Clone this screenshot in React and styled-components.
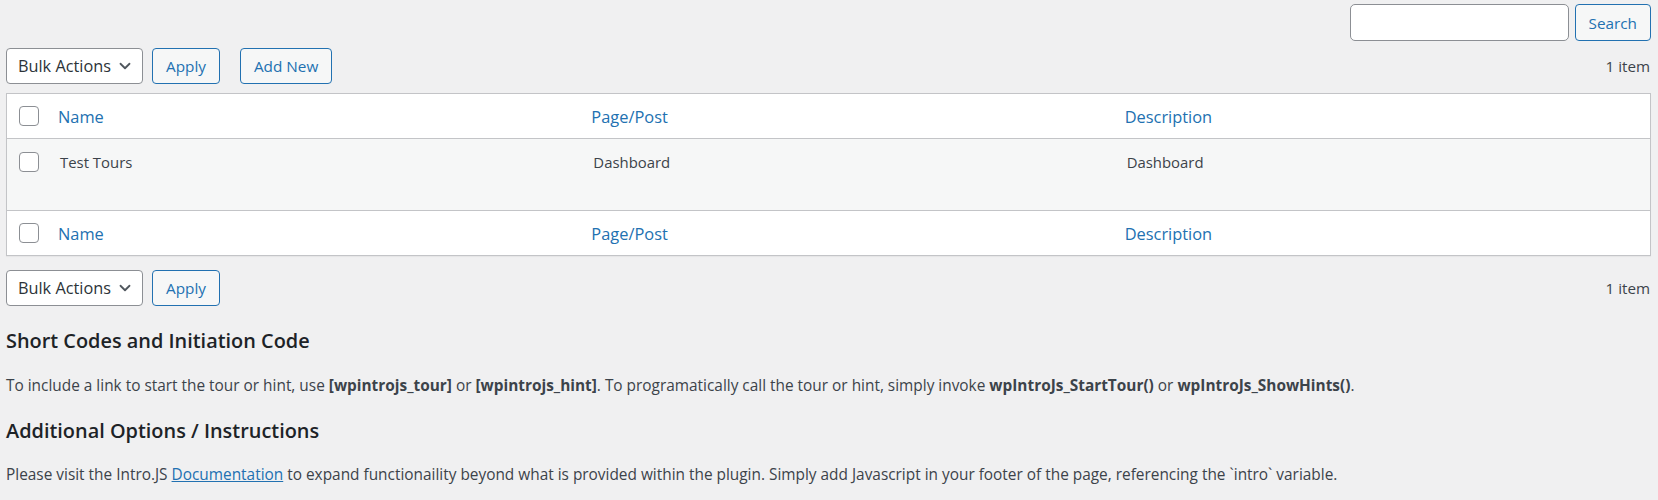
import React from "react";
import styled, { createGlobalStyle } from "styled-components";

const Global = createGlobalStyle`
  html, body { margin: 0; padding: 0; background: #f0f0f1; }
  body { font-family: "Open Sans", "Noto Sans", sans-serif; color: #3c434a; }
  * { box-sizing: border-box; }
`;

const Page = styled.div`
  padding: 4px 7px 0 6px;
`;

const SearchBox = styled.div`
  display: flex;
  justify-content: flex-end;
  gap: 6px;
`;

const SearchInput = styled.input`
  width: 219px;
  height: 37px;
  border: 1px solid #8c8f94;
  border-radius: 5px;
  background: #fff;
  padding: 0 10px;
  font: inherit;
`;

const Button = styled.button`
  height: ${(p) => p.$h || 36}px;
  padding: 0 13px;
  border: 1px solid #2271b1;
  border-radius: 4px;
  background: #f6f7f7;
  color: #2271b1;
  font-family: "Open Sans", sans-serif;
  font-size: 15.3px;
  margin-left: ${(p) => p.$ml || 0}px;
  cursor: pointer;
`;

const Nav = styled.div`
  display: flex;
  align-items: center;
  margin-top: ${(p) => p.$mt}px;
  height: 36px;
`;

const NavLeft = styled.div`
  display: flex;
  align-items: center;
  flex: 1;
`;

const Select = styled.div`
  width: 137px;
  height: 36px;
  border: 1px solid #8c8f94;
  border-radius: 4px;
  background: #fff;
  color: #2c3338;
  display: flex;
  align-items: center;
  justify-content: space-between;
  padding: 0 8px 0 11px;
  font-size: 16.3px;
`;

const Count = styled.div`
  font-size: 15.2px;
  color: #3c434a;
  padding-right: 1px;
`;

const Table = styled.div`
  margin-top: 9px;
  border: 1px solid #c3c4c7;
  background: #fff;
  box-shadow: 0 1px 1px rgba(0, 0, 0, 0.04);
`;

const Row = styled.div`
  display: grid;
  grid-template-columns: 43px 1fr 1fr 1fr;
  height: ${(p) => p.$h}px;
  align-items: ${(p) => (p.$top ? "start" : "center")};
  background: ${(p) => (p.$alt ? "#f6f7f7" : "#fff")};
  border-top: ${(p) => (p.$bt ? "1px solid #c3c4c7" : "none")};
  border-bottom: ${(p) => (p.$bb ? "1px solid #c3c4c7" : "none")};
  padding-top: ${(p) => (p.$top ? 13 : 0)}px;
`;

const Check = styled.span`
  display: block;
  width: 20px;
  height: 20px;
  margin-left: 12px;
  border: 1px solid #8c8f94;
  border-radius: 4px;
  background: #fff;
`;

const Th = styled.div`
  padding-left: 8px;
  color: #2271b1;
  font-size: 16.4px;
  margin-top: 0;
`;

const Td = styled.div`
  padding-left: 10px;
  color: #3c434a;
  font-size: 14.9px;
  line-height: 20px;
`;

const H2 = styled.h2`
  margin: 0;
  margin-top: ${(p) => p.$mt}px;
  font-size: 19.9px;
  font-weight: 600;
  color: #1d2327;
  line-height: 28px;
`;

const P = styled.p`
  margin: 0;
  margin-top: ${(p) => p.$mt}px;
  font-size: 15.4px;
  line-height: 22px;
  color: #3c434a;
`;

const Link = styled.a`
  color: #2271b1;
  text-decoration: underline;
`;

const Chevron = () => (
  <svg width="18" height="18" viewBox="0 0 20 20" fill="none">
    <path d="M5 7.5l5 5 5-5" stroke="#50575e" strokeWidth="2" strokeLinecap="round" strokeLinejoin="round" />
  </svg>
);

const Header = ({ bt, bb }) => (
  <Row $h={45} $bt={bt} $bb={bb}>
    <Check />
    <Th>Name</Th>
    <Th>Page/Post</Th>
    <Th>Description</Th>
  </Row>
);

export default function App() {
  return (
    <>
      <Global />
      <Page>
        <SearchBox>
          <SearchInput aria-label="Search" />
          <Button $h={37}>Search</Button>
        </SearchBox>
        <Nav $mt={7}>
          <NavLeft>
            <Select>
              <span>Bulk Actions</span>
              <Chevron />
            </Select>
            <Button $ml={9}>Apply</Button>
            <Button $ml={20}>Add New</Button>
          </NavLeft>
          <Count>1 item</Count>
        </Nav>
        <Table>
          <Header bb />
          <Row $h={71} $alt $top>
            <Check />
            <Td>Test Tours</Td>
            <Td>Dashboard</Td>
            <Td>Dashboard</Td>
          </Row>
          <Header bt />
        </Table>
        <Nav $mt={14}>
          <NavLeft>
            <Select>
              <span>Bulk Actions</span>
              <Chevron />
            </Select>
            <Button $ml={9}>Apply</Button>
          </NavLeft>
          <Count>1 item</Count>
        </Nav>
        <H2 $mt={21}>Short Codes and Initiation Code</H2>
        <P $mt={20}>
          To include a link to start the tour or hint, use <b>[wpintrojs_tour]</b> or{" "}
          <b>[wpintrojs_hint]</b>. To programatically call the tour or hint, simply invoke{" "}
          <b>wpIntroJs_StartTour()</b> or <b>wpIntroJs_ShowHints()</b>.
        </P>
        <H2 $mt={20}>Additional Options / Instructions</H2>
        <P $mt={19}>
          Please visit the Intro.JS <Link href="#">Documentation</Link> to expand functionaility
          beyond what is provided within the plugin. Simply add Javascript in your footer of the
          page, referencing the `intro` variable.
        </P>
      </Page>
    </>
  );
}
